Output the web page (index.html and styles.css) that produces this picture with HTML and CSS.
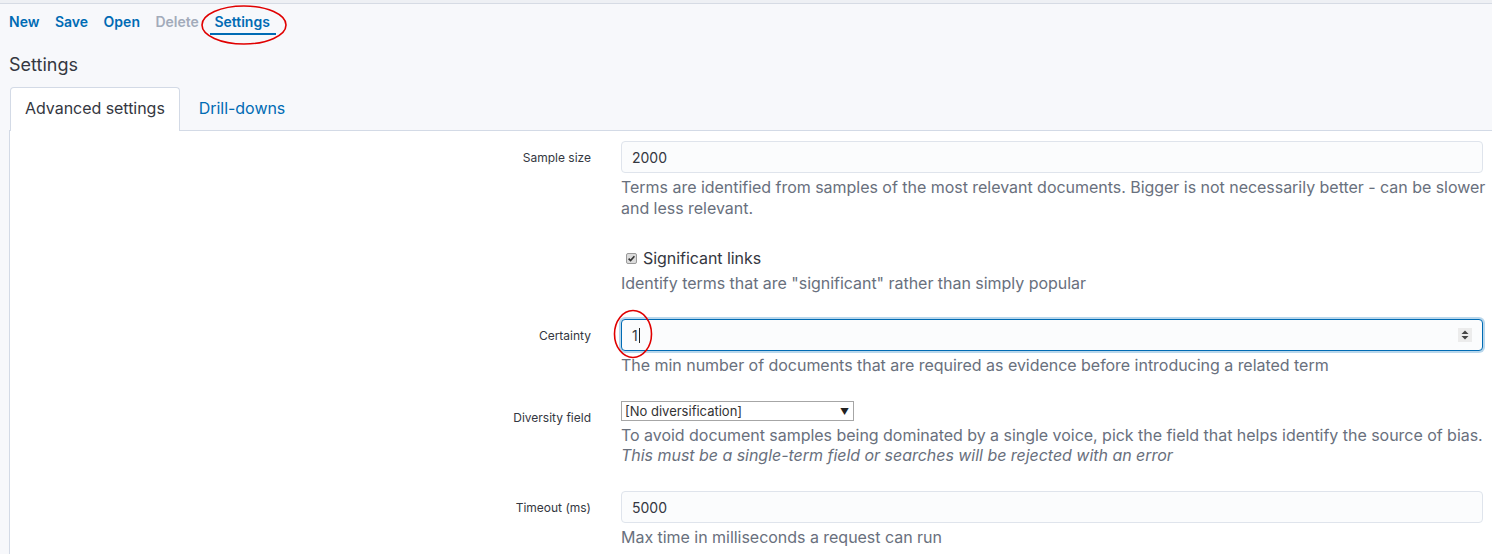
FILE: index.html
```html
<!DOCTYPE html>
<html>
<head>
<meta charset="utf-8">
<link rel="stylesheet" href="styles.css">
</head>
<body>
<div class="topstrip"></div>
<nav class="nav">
  <a class="nav-item">New</a>
  <a class="nav-item">Save</a>
  <a class="nav-item">Open</a>
  <a class="nav-item disabled">Delete</a>
  <a class="nav-item active">Settings</a>
</nav>
<main class="main">
  <h2 class="title">Settings</h2>
  <div class="tabbar">
    <div class="tab selected">Advanced settings</div>
    <div class="tab">Drill-downs</div>
  </div>
  <section class="panel">
    <div class="row row-first">
      <div class="label">Sample size</div>
      <div class="field">
        <div class="input"><span>2000</span></div>
        <div class="help">Terms are identified from samples of the most relevant documents. Bigger is not necessarily better - can be slower and less relevant.</div>
      </div>
    </div>
    <div class="row row-check">
      <div class="label"></div>
      <div class="field">
        <div class="check-line">
          <span class="checkbox"><svg width="11" height="11" viewBox="0 0 11 11"><rect x="0.5" y="0.5" width="10" height="10" rx="1.5" fill="#dcdcdc" stroke="#9a9a9a"/><path d="M2.6 5.6 L4.6 7.6 L8.4 3.2" fill="none" stroke="#333" stroke-width="1.6"/></svg></span>
          <span class="check-text">Significant links</span>
        </div>
        <div class="help help-tight">Identify terms that are "significant" rather than simply popular</div>
      </div>
    </div>
    <div class="row row-cert">
      <div class="label">Certainty</div>
      <div class="field">
        <div class="input focused"><span>1</span><span class="caret"></span>
          <span class="spinner"><svg width="14" height="14" viewBox="0 0 14 14"><rect width="14" height="14" fill="#ececec"/><path d="M3.5 6 L7 2.5 L10.5 6 Z" fill="#444"/><path d="M3.5 8 L7 11.5 L10.5 8 Z" fill="#444"/></svg></span>
        </div>
        <div class="help">The min number of documents that are required as evidence before introducing a related term</div>
      </div>
    </div>
    <div class="row row-div">
      <div class="label">Diversity field</div>
      <div class="field">
        <div class="select"><span>[No diversification]</span><span class="arrow">▼</span></div>
        <div class="help help-select">To avoid document samples being dominated by a single voice, pick the field that helps identify the source of bias.<br><em>This must be a single-term field or searches will be rejected with an error</em></div>
      </div>
    </div>
    <div class="row">
      <div class="label">Timeout (ms)</div>
      <div class="field">
        <div class="input"><span>5000</span></div>
        <div class="help">Max time in milliseconds a request can run</div>
      </div>
    </div>
  </section>
</main>
<svg class="mark mark-settings" width="90" height="42" viewBox="0 0 90 42"><ellipse cx="45" cy="21" rx="42" ry="19" fill="none" stroke="#e00000" stroke-width="1.6"/></svg>
<svg class="mark mark-certainty" width="42" height="52" viewBox="0 0 42 52"><ellipse cx="21" cy="26" rx="18.5" ry="23.5" fill="none" stroke="#e00000" stroke-width="1.6"/></svg>
</body>
</html>
```
FILE: styles.css
```css
* { box-sizing: border-box; }
html, body { margin: 0; padding: 0; }
body {
  font-family: Inter, "Noto Sans", sans-serif;
  background: #f7f8fb;
  color: #343741;
  height: 554px;
  overflow: hidden;
  position: relative;
}
.topstrip {
  height: 4px;
  background: #eef0f4;
  border-bottom: 1px solid #d6dbe4;
}
.nav {
  display: flex;
  align-items: center;
  gap: 15.5px;
  height: 36px;
  padding-left: 9px;
}
.nav-item {
  position: relative;
  font-size: 14px;
  font-weight: 600;
  line-height: 20px;
  color: #006bb4;
}
.nav-item.disabled { color: #a2abba; }
.nav-item.active::after {
  content: "";
  position: absolute;
  left: -4px;
  right: -6px;
  bottom: -3px;
  height: 2px;
  background: #006bb4;
}
.main {
  padding-left: 9px;
}
.title {
  margin: 13px 0 10px;
  font-size: 18px;
  font-weight: 400;
  line-height: 24px;
  color: #343741;
}
.tabbar {
  display: flex;
  gap: 3px;
  padding-left: 1px;
  border-bottom: 1px solid #d3dae6;
}
.tab {
  height: 44px;
  margin-bottom: -1px;
  padding: 0 15px 3px;
  display: flex;
  align-items: center;
  font-size: 16px;
  letter-spacing: -0.04px;
  color: #006bb4;
  border: 1px solid transparent;
  border-bottom: none;
}
.tab.selected {
  background: #fff;
  color: #343741;
  border-color: #d3dae6;
  border-radius: 4px 4px 0 0;
  padding: 0 14px 3px 14px;
}
.panel {
  background: #fff;
  border-left: 1px solid #d3dae6;
  padding-top: 10px;
  min-height: 440px;
}
.row {
  display: grid;
  grid-template-columns: 581px 862px;
  column-gap: 30px;
  margin-top: 26px;
}
.row-first { margin-top: 0; }
.row-check { margin-top: 27px; }
.row-cert { margin-top: 25px; }
.row-div { margin-top: 25px; }
.label {
  height: 32px;
  display: flex;
  align-items: center;
  justify-content: flex-end;
  font-size: 12px;
  color: #343741;
}
.field { display: flex; flex-direction: column; align-items: flex-start; }
.input {
  position: relative;
  width: 862px;
  height: 32px;
  display: flex;
  align-items: center;
  padding-left: 10px;
  font-size: 14px;
  color: #343741;
  background: #fbfcfd;
  border: 1px solid #dfe4ec;
  border-radius: 4px;
}
.input.focused {
  border-color: #006bb4;
  box-shadow: 0 0 0 2px #b9d7ec;
}
.caret {
  display: inline-block;
  width: 1px;
  height: 15px;
  background: #222;
  margin-left: 1px;
}
.spinner {
  position: absolute;
  right: 10px;
  top: 8px;
  display: flex;
}
.help {
  width: 866px;
  margin-top: 4px;
  font-size: 16px;
  line-height: 21px;
  letter-spacing: -0.03px;
  color: #69707d;
}
.help-tight { margin-top: 3px; }
.help-select { margin-top: 4px; line-height: 20px; }
.help em { font-style: italic; }
.check-line {
  height: 24px;
  display: flex;
  align-items: center;
  padding-left: 5px;
}
.checkbox { display: flex; margin-right: 6px; }
.check-text { font-size: 16px; color: #343741; letter-spacing: -0.05px; }
.select {
  width: 233px;
  height: 20px;
  display: flex;
  align-items: center;
  justify-content: space-between;
  padding: 0 4px 0 3px;
  font-size: 13px;
  color: #333;
  background: #fff;
  border: 1px solid #a6a6a6;
}
.select .arrow { font-size: 9px; color: #222; }
.mark { position: absolute; }
.mark-settings { left: 199px; top: 4px; }
.mark-certainty { left: 612px; top: 308px; }
```
